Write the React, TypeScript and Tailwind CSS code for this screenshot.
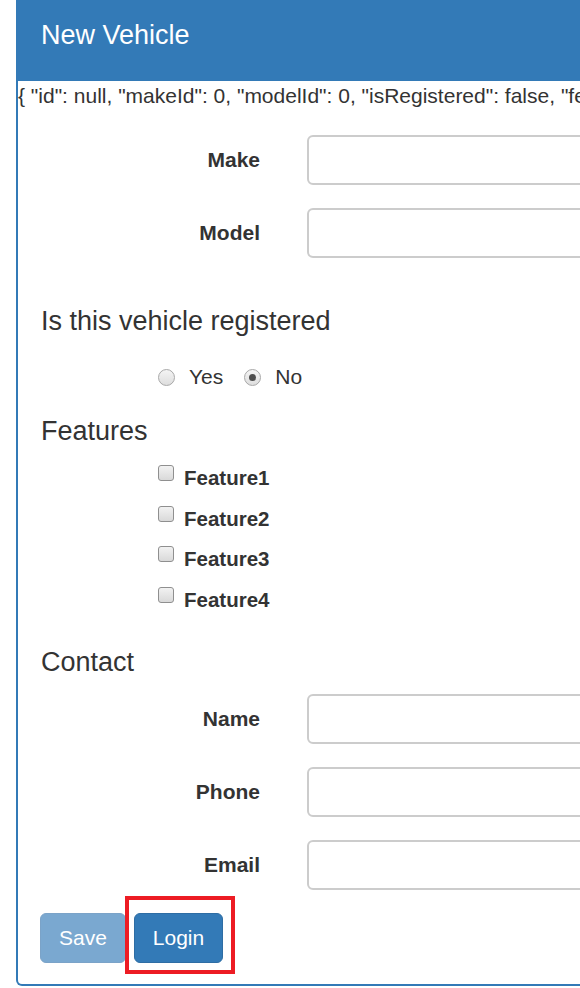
const contactFields = ['Name', 'Phone', 'Email']
const vehicleFields = ['Make', 'Model']
const features = ['Feature1', 'Feature2', 'Feature3', 'Feature4']

function FieldRow({ label, className }: { label: string; className?: string }) {
  return (
    <div className={`flex items-center ${className ?? ''}`}>
      <label className="w-[242px] text-right text-[21px] leading-[30px] font-bold">{label}</label>
      <div className="ml-[47px] h-[50px] flex-1 rounded-[6px] border-2 border-[#cccccc] bg-white" />
    </div>
  )
}

function Radio({ label, checked }: { label: string; checked?: boolean }) {
  return (
    <label className="flex items-center gap-[14px]">
      <span className="flex h-[17px] w-[17px] items-center justify-center rounded-full border border-[#a8a8a8] bg-gradient-to-b from-[#f4f4f4] to-[#dedede]">
        {checked && <span className="h-[7px] w-[7px] rounded-full bg-[#4d4d4d]" />}
      </span>
      <span>{label}</span>
    </label>
  )
}

function Checkbox({ label }: { label: string }) {
  return (
    <label className="flex items-start gap-[10px]">
      <span className="mt-[2px] h-[16px] w-[16px] rounded-[3px] border border-[#8f8f8f] bg-gradient-to-b from-[#f2f2f2] to-[#d9d9d9]" />
      <span className="font-bold">{label}</span>
    </label>
  )
}

export default function App() {
  return (
    <div className="relative h-[988px] w-[580px] overflow-hidden bg-white font-['Liberation_Sans',Arial,sans-serif] text-[21px] leading-[30px] text-[#333333]">
      <div className="ml-[16px] w-[720px] rounded-b-[6px] border-2 border-t-0 border-[#337ab7] pb-[21px]">
        <div className="-ml-[2px] h-[81px] bg-[#337ab7] pt-[20px] pl-[25px] text-[27px] leading-[30px] text-white">
          New Vehicle
        </div>

        <div className="whitespace-nowrap">
          {'{ "id": null, "makeId": 0, "modelId": 0, "isRegistered": false, "features": [], "contact": {} }'}
        </div>

        {vehicleFields.map((f, i) => (
          <FieldRow key={f} label={f} className={i === 0 ? 'mt-[24px]' : 'mt-[23px]'} />
        ))}

        <h4 className="mt-[48px] pl-[23px] text-[27px] leading-[30px]">Is this vehicle registered</h4>
        <div className="mt-[26px] flex gap-[21px] pl-[140px]">
          <Radio label="Yes" />
          <Radio label="No" checked />
        </div>

        <h4 className="mt-[24px] pl-[23px] text-[27px] leading-[30px]">Features</h4>
        <div className="mt-[17px] flex flex-col gap-[10.5px] pl-[140px] text-[20.5px]">
          {features.map((f) => (
            <Checkbox key={f} label={f} />
          ))}
        </div>

        <h4 className="mt-[32px] pl-[23px] text-[27px] leading-[30px]">Contact</h4>
        {contactFields.map((f, i) => (
          <FieldRow key={f} label={f} className={i === 0 ? 'mt-[17px]' : 'mt-[23px]'} />
        ))}

        <div className="mt-[23px] flex gap-[8px] pl-[22px]">
          <button className="h-[50px] w-[86px] rounded-[6px] border border-[#7ba3c8] bg-[#7aa8d0] text-white">
            Save
          </button>
          <button className="h-[50px] w-[89px] rounded-[6px] border border-[#2e6da4] bg-[#337ab7] text-white">
            Login
          </button>
        </div>
      </div>

      <div className="absolute top-[896px] left-[125px] h-[78px] w-[110px] border-4 border-[#ed1c24]" />
    </div>
  )
}
